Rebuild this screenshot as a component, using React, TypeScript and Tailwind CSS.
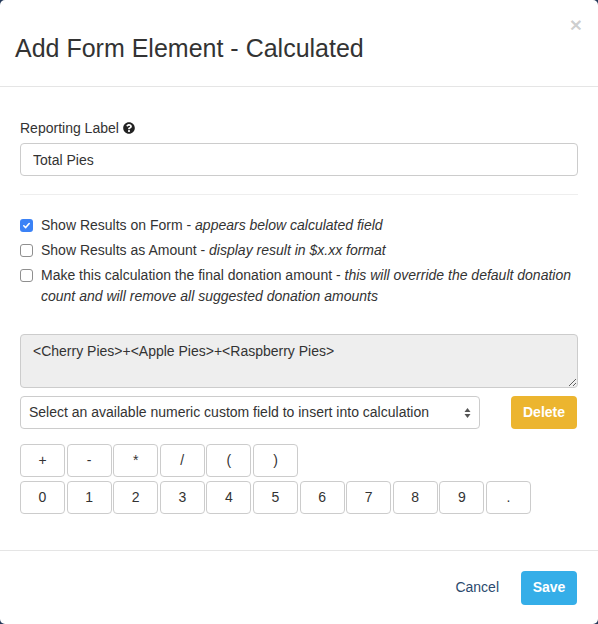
import { FaQuestionCircle } from 'react-icons/fa'

const ops = ['+', '-', '*', '/', '(', ')']
const digits = ['0', '1', '2', '3', '4', '5', '6', '7', '8', '9', '.']

function CheckBox({ checked }: { checked?: boolean }) {
  if (checked) {
    return (
      <span className="mt-[4px] flex h-[13px] w-[13px] shrink-0 items-center justify-center rounded-[3px] bg-[#3b82f6]">
        <svg width="9" height="9" viewBox="0 0 10 10" fill="none">
          <path d="M2 5.3 L4.1 7.3 L8 2.8" stroke="white" strokeWidth="1.8" strokeLinecap="round" strokeLinejoin="round" />
        </svg>
      </span>
    )
  }
  return <span className="mt-[4px] h-[13px] w-[13px] shrink-0 rounded-[3px] border border-[#8f8f8f] bg-white" />
}

function CalcButton({ label }: { label: string }) {
  return (
    <button className="flex h-[33px] w-[45px] items-center justify-center rounded-[4px] border border-[#ccc] bg-white text-[14px] text-[#333]">
      {label}
    </button>
  )
}

export default function App() {
  return (
    <div className="h-[624px] w-[598px] bg-[#24395a]" style={{ fontFamily: '"Liberation Sans", Arial, sans-serif' }}>
      <div className="flex h-full w-full flex-col rounded-[5px] bg-white text-[14px] text-[#333]">
        {/* header */}
        <div className="relative h-[87px] shrink-0 border-b border-[#e5e5e5] px-[15px] pt-[33px]">
          <h4 className="text-[25px] leading-[30px] text-[#333]">Add Form Element - Calculated</h4>
          <span className="absolute right-[16px] top-[14px] text-[21px] font-bold leading-[21px] text-black/20">×</span>
        </div>

        {/* body */}
        <div className="flex flex-1 flex-col px-[20px] pt-[31px]">
          <label className="flex items-center gap-[4px] leading-[20px]">
            Reporting Label
            <FaQuestionCircle className="text-[12px] text-[#222]" />
          </label>
          <input
            readOnly
            value="Total Pies"
            className="mt-[5px] h-[33px] w-full rounded-[4px] border border-[#ccc] px-[12px] text-[14px] text-[#333] outline-none"
          />
          <div className="mt-[18px] border-t border-[#eee]" />

          <div className="mt-[20px] flex flex-col gap-[4px] leading-[21px]">
            <div className="flex gap-[8px]">
              <CheckBox checked />
              <span>
                Show Results on Form - <i>appears below calculated field</i>
              </span>
            </div>
            <div className="flex gap-[8px]">
              <CheckBox />
              <span>
                Show Results as Amount - <i>display result in $x.xx format</i>
              </span>
            </div>
            <div className="flex gap-[8px]">
              <CheckBox />
              <span>
                Make this calculation the final donation amount -{' '}
                <i>this will override the default donation count and will remove all suggested donation amounts</i>
              </span>
            </div>
          </div>

          <textarea
            readOnly
            defaultValue="<Cherry Pies>+<Apple Pies>+<Raspberry Pies>"
            className="mt-[27px] h-[54px] w-full rounded-[4px] border border-[#ccc] bg-[#eee] px-[12px] py-[6px] text-[14px] leading-[20px] text-[#333] outline-none"
          />

          <div className="mt-[8px] flex items-center justify-between">
            <div className="flex h-[33px] w-[460px] items-center justify-between rounded-[4px] border border-[#ccc] bg-white pl-[8px] pr-[8px] text-[#333]">
              <span>Select an available numeric custom field to insert into calculation</span>
              <svg width="7" height="12" viewBox="0 0 7 12">
                <path d="M3.5 1 L6.5 5 H0.5 Z" fill="#555" />
                <path d="M3.5 11 L6.5 7 H0.5 Z" fill="#555" />
              </svg>
            </div>
            <button className="mr-[1px] h-[33px] w-[66px] rounded-[4px] bg-[#ecb52f] text-[14px] font-bold text-white">
              Delete
            </button>
          </div>

          <div className="mt-[15px] flex flex-col gap-[4px]">
            <div className="flex gap-[1.6px]">
              {ops.map((o) => (
                <CalcButton key={o} label={o} />
              ))}
            </div>
            <div className="flex gap-[1.6px]">
              {digits.map((d) => (
                <CalcButton key={d} label={d} />
              ))}
            </div>
          </div>
        </div>

        {/* footer */}
        <div className="flex h-[74px] shrink-0 items-center justify-end gap-[22px] border-t border-[#e5e5e5] pr-[21px]">
          <span className="text-[#2b4a6e]">Cancel</span>
          <button className="h-[34px] w-[56px] rounded-[4px] bg-[#35aee8] text-[14px] font-bold text-white">Save</button>
        </div>
      </div>
    </div>
  )
}
